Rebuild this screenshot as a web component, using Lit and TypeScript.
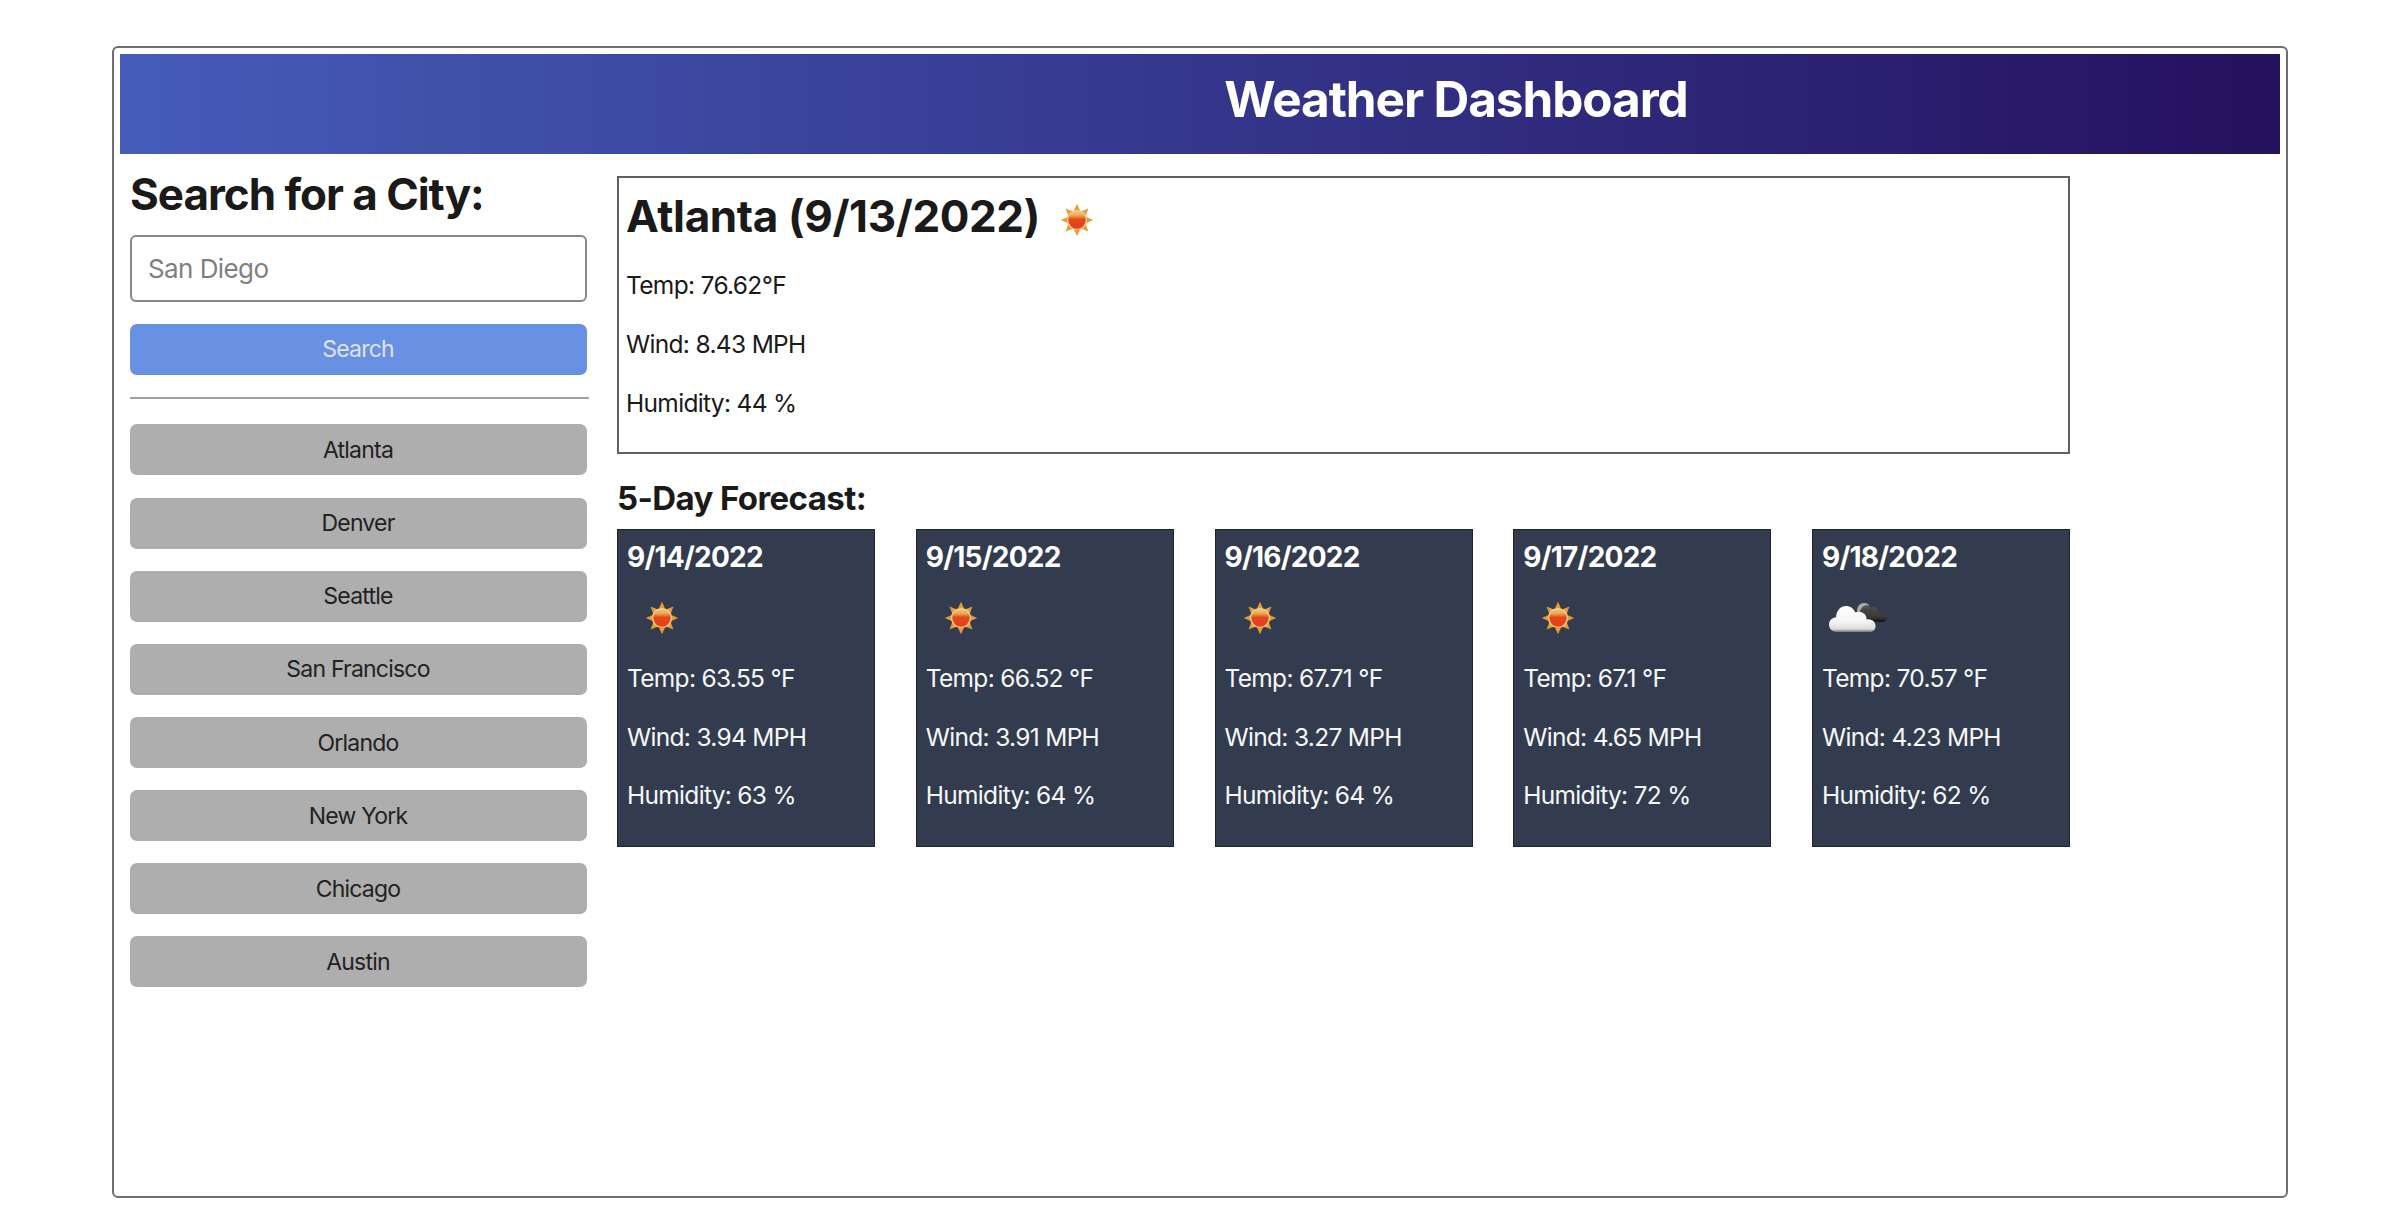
import { LitElement, html, css, svg } from "lit";
import { customElement, property } from "lit/decorators.js";

interface Day {
  date: string;
  icon: "sun" | "cloud";
  temp: string;
  wind: string;
  humidity: string;
}

const CITIES = ["Atlanta", "Denver", "Seattle", "San Francisco", "Orlando", "New York", "Chicago", "Austin"];

const DAYS: Day[] = [
  { date: "9/14/2022", icon: "sun", temp: "63.55", wind: "3.94", humidity: "63" },
  { date: "9/15/2022", icon: "sun", temp: "66.52", wind: "3.91", humidity: "64" },
  { date: "9/16/2022", icon: "sun", temp: "67.71", wind: "3.27", humidity: "64" },
  { date: "9/17/2022", icon: "sun", temp: "67.1", wind: "4.65", humidity: "72" },
  { date: "9/18/2022", icon: "cloud", temp: "70.57", wind: "4.23", humidity: "62" },
];

@customElement("weather-icon")
export class WeatherIcon extends LitElement {
  @property() name = "sun";

  static styles = css`
    :host { display: block; width: 70px; height: 36px; }
    svg { display: block; width: 70px; height: 36px; }
  `;

  private sun() {
    const rays = [0, 45, 90, 135, 180, 225, 270, 315];
    return svg`
      <defs>
        <linearGradient id="body" x1="0" y1="0" x2="0" y2="1">
          <stop offset="0" stop-color="#f3d08a" />
          <stop offset="0.28" stop-color="#e9a445" />
          <stop offset="0.46" stop-color="#e5491e" />
          <stop offset="1" stop-color="#e83c16" />
        </linearGradient>
      </defs>
      ${rays.map((a) => svg`<path d="M35 1.8 L38.6 9.8 L31.4 9.8 Z" fill="#e59d35" transform="rotate(${a} 35 18)" />`)}
      <circle cx="35" cy="18" r="9.4" fill="url(#body)" stroke="#f3c88e" stroke-width="1.4" />`;
  }

  private cloud() {
    return svg`
      <defs>
        <linearGradient id="front" x1="0" y1="0" x2="0" y2="1">
          <stop offset="0" stop-color="#ffffff" />
          <stop offset="0.6" stop-color="#f4f4f4" />
          <stop offset="0.88" stop-color="#dcdcdc" />
          <stop offset="1" stop-color="#777777" />
        </linearGradient>
        <linearGradient id="back" x1="0" y1="0" x2="0" y2="1">
          <stop offset="0" stop-color="#6a6a6a" />
          <stop offset="0.35" stop-color="#454545" />
          <stop offset="0.75" stop-color="#383838" />
          <stop offset="1" stop-color="#111111" />
        </linearGradient>
      </defs>
      <path d="M35 12 C35 6 38 3 42 3 C45.500 3 47.500 5 48.500 7.500 C53 6.500 56.500 8.500 57.500 12.500 C62 12.500 65 14 65 17.500 C65 20.500 63 22 60 22 L42 22 Z" fill="url(#back)" />
      <path d="M35 12 C35 6 38 3 42 3 C44.500 3 46 4 47.500 5.600 C43 4.500 39 6.500 37.500 13 Z" fill="#a9a9a9" />
      <path d="M15 32 C10 32 7 28.500 7 24.500 C7 20.500 10 17.500 14 17.200 C14.500 10.500 18.500 6 24 6 C28.500 6 31.500 8.500 33.200 12.300 C39 10.500 44.500 13.500 44.600 19.300 C50 19 53.500 21.500 53.500 26 C53.500 30 51 32 47 32 Z" fill="url(#front)" />`;
  }

  render() {
    return html`<svg viewBox="0 0 70 36" aria-hidden="true">${this.name === "cloud" ? this.cloud() : this.sun()}</svg>`;
  }
}

@customElement("forecast-card")
export class ForecastCard extends LitElement {
  @property({ attribute: false }) day!: Day;

  static styles = css`
    :host {
      display: block;
      box-sizing: border-box;
      height: 318px;
      padding: 10px 8px 0 9px;
      border: 1.5px solid #20242b;
      background: #323c4e;
      color: #f7f7f8;
    }
    .date { margin: 0; font-size: 28px; line-height: 34px; font-weight: 700; letter-spacing: -0.77px; color: #fff; }
    weather-icon { margin: 26.5px 0 26.5px; }
    .line { margin: 0 0 28.6px; font-size: 24.500px; line-height: 30px; letter-spacing: -0.69px; white-space: nowrap; }
  `;

  render() {
    const d = this.day;
    return html`
      <h4 class="date">${d.date}</h4>
      <weather-icon name=${d.icon}></weather-icon>
      <p class="line">Temp: ${d.temp} °F</p>
      <p class="line">Wind: ${d.wind} MPH</p>
      <p class="line">Humidity: ${d.humidity} %</p>
    `;
  }
}

@customElement("app-root")
export class AppRoot extends LitElement {
  static styles = css`
    :host {
      display: block;
      box-sizing: border-box;
      width: 2389px;
      height: 1218px;
      padding: 46px 101px 20px 112px;
      background: #fff;
      color: #1a1a1a;
      font-family: Inter, "Liberation Sans", sans-serif;
    }
    * { box-sizing: border-box; }
    .window { height: 1152px; padding: 6px; border: 2px solid #6e6e70; border-radius: 6px; }
    .header {
      height: 100.4px;
      padding: 15px 0 0 512px;
      background: linear-gradient(90deg, #455cb9, #25115e);
      color: #fff;
      text-align: center;
    }
    .header h1 { margin: 0; font-size: 49.500px; line-height: 60px; font-weight: 700; letter-spacing: -1.1px; }
    .columns { display: flex; }
    .sidebar { width: 469px; padding: 13.6px 0 0 10px; }
    .sidebar h2 { margin: 0 0 15px; font-size: 44px; line-height: 52px; font-weight: 700; letter-spacing: -1.02px; white-space: nowrap; }
    .field {
      display: block;
      width: 457px;
      height: 67px;
      padding: 0 16px;
      border: 2px solid #868686;
      border-radius: 6px;
      background: #fff;
      font: 400 26px Inter, "Liberation Sans", sans-serif;
      letter-spacing: -0.58px;
    }
    .field::placeholder { color: #7f7f7f; opacity: 1; }
    .btn {
      display: block;
      width: 457px;
      height: 51px;
      padding: 0 1px 0 0;
      border: 0;
      border-radius: 7px;
      background: #aeaeae;
      color: #222;
      font: 400 23px Inter, "Liberation Sans", sans-serif;
      letter-spacing: -0.78px;
    }
    .search { margin-top: 22px; background: #6891e4; color: #e0e2ea; }
    .rule { height: 2px; margin: 22px 0 25.5px; background: #a0a0a0; }
    .cities { display: flex; flex-direction: column; gap: 22.15px; }
    .main { width: 1453px; margin-left: 28px; padding-top: 21.6px; }
    .today { height: 278px; padding: 10px 7px 0; border: 2px solid #606060; }
    .heading { display: flex; align-items: center; }
    .heading h2 { margin: 0; font-size: 44px; line-height: 56px; font-weight: 700; letter-spacing: -0.38px; white-space: nowrap; }
    .heading weather-icon { margin: 8px 0 0 2px; }
    .line { margin: 0 0 29px; font-size: 24.500px; line-height: 30px; letter-spacing: -0.67px; }
    .heading + .line { margin-top: 26px; }
    .sub { margin: 24px 0 11px; font-size: 33px; line-height: 40px; font-weight: 700; letter-spacing: -0.6px; }
    .forecast { display: grid; grid-template-columns: repeat(5, 258px); justify-content: space-between; }
  `;

  render() {
    return html`
      <div class="window">
        <header class="header"><h1>Weather Dashboard</h1></header>
        <div class="columns">
          <aside class="sidebar">
            <h2>Search for a City:</h2>
            <input class="field" type="text" placeholder="San Diego" />
            <button class="btn search">Search</button>
            <div class="rule"></div>
            <nav class="cities">${CITIES.map((c) => html`<button class="btn">${c}</button>`)}</nav>
          </aside>
          <main class="main">
            <section class="today">
              <div class="heading">
                <h2>Atlanta (9/13/2022)</h2>
                <weather-icon name="sun"></weather-icon>
              </div>
              <p class="line">Temp: 76.62°F</p>
              <p class="line">Wind: 8.43 MPH</p>
              <p class="line">Humidity: 44 %</p>
            </section>
            <h3 class="sub">5-Day Forecast:</h3>
            <section class="forecast">
              ${DAYS.map((d) => html`<forecast-card .day=${d}></forecast-card>`)}
            </section>
          </main>
        </div>
      </div>
    `;
  }
}
